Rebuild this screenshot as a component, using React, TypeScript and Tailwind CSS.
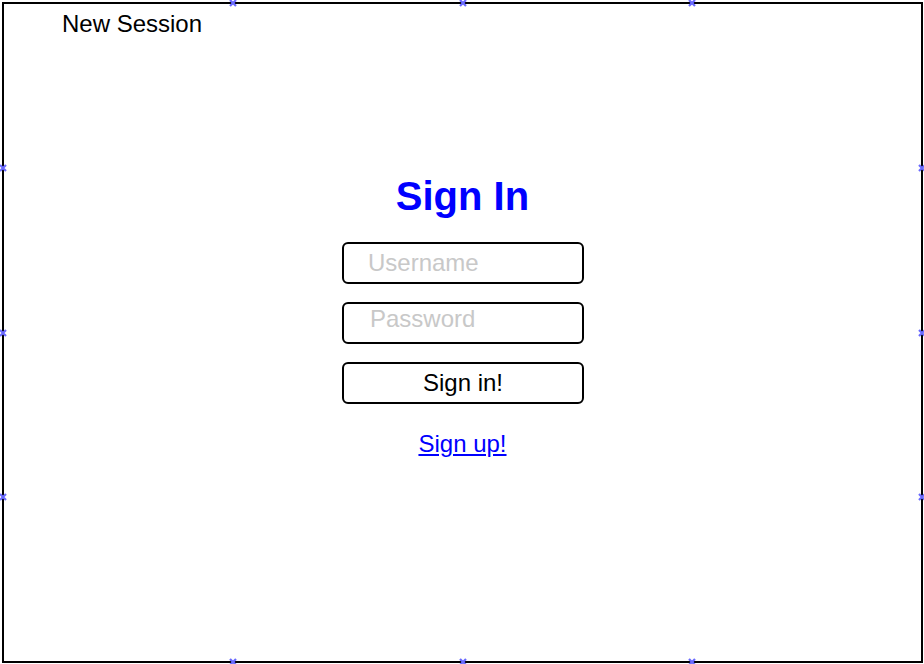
import type { ReactNode } from 'react';

function Handle({ className }: { className: string }) {
  return (
    <svg
      className={`absolute h-[10px] w-[10px] ${className}`}
      viewBox="0 0 10 10"
      fill="none"
      stroke="#6a6aff"
      strokeWidth="2.2"
    >
      <path d="M2 2L8 8M8 2L2 8" />
    </svg>
  );
}

function Frame({ children }: { children: ReactNode }) {
  return (
    <div className="relative ml-[2px] mt-[2px] h-[661px] w-[921px] border-2 border-black bg-white">
      {/* selection handles on the frame border */}
      <Handle className="left-1/4 top-[-1px] -translate-x-1/2 -translate-y-1/2" />
      <Handle className="left-1/2 top-[-1px] -translate-x-1/2 -translate-y-1/2" />
      <Handle className="left-3/4 top-[-1px] -translate-x-1/2 -translate-y-1/2" />
      <Handle className="bottom-[-1px] left-1/4 -translate-x-1/2 translate-y-1/2" />
      <Handle className="bottom-[-1px] left-1/2 -translate-x-1/2 translate-y-1/2" />
      <Handle className="bottom-[-1px] left-3/4 -translate-x-1/2 translate-y-1/2" />
      <Handle className="left-[-1px] top-1/4 -translate-x-1/2 -translate-y-1/2" />
      <Handle className="left-[-1px] top-1/2 -translate-x-1/2 -translate-y-1/2" />
      <Handle className="left-[-1px] top-3/4 -translate-x-1/2 -translate-y-1/2" />
      <Handle className="right-[-1px] top-1/4 translate-x-1/2 -translate-y-1/2" />
      <Handle className="right-[-1px] top-1/2 translate-x-1/2 -translate-y-1/2" />
      <Handle className="right-[-1px] top-3/4 translate-x-1/2 -translate-y-1/2" />
      {children}
    </div>
  );
}

export default function App() {
  return (
    <div className="h-[664px] w-[924px] overflow-hidden bg-white font-['Liberation_Sans',Arial,sans-serif] text-black">
      <Frame>
        <div className="pl-[58px] pt-[6px] text-[24px] leading-[28px]">New Session</div>

        <div className="mt-[134px] flex flex-col items-center">
          <h1 className="text-[40px] font-bold leading-[48px] text-[#0000ff]">Sign In</h1>

          <form className="mt-[22px] flex flex-col items-center gap-[18px] pl-[1px]">
            <input
              type="text"
              placeholder="Username"
              className="h-[42px] w-[242px] rounded-md border-2 border-black pl-[24px] text-[24px] outline-none placeholder:text-[#c8c8c8]"
            />
            <input
              type="password"
              placeholder="Password"
              className="h-[42px] w-[242px] rounded-md border-2 border-black pb-[8px] pl-[26px] text-[24px] outline-none placeholder:text-[#c8c8c8]"
            />
            <button
              type="button"
              className="h-[42px] w-[242px] rounded-md border-2 border-black bg-white text-[24px]"
            >
              Sign in!
            </button>
          </form>

          <a href="#" className="mt-[26px] text-[24px] leading-[28px] text-[#0000ff] underline">
            Sign up!
          </a>
        </div>
      </Frame>
    </div>
  );
}
